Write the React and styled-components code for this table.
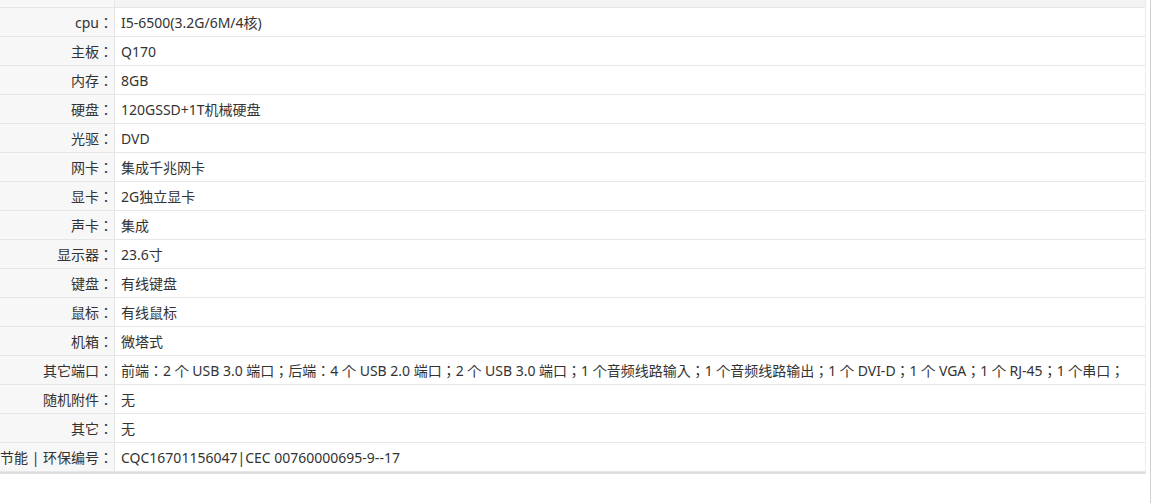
import React from 'react';
import styled, { createGlobalStyle } from 'styled-components';

const GlobalStyle = createGlobalStyle`
  html, body {
    margin: 0;
    padding: 0;
    background: #fff;
  }
  body {
    font-family: "Noto Sans", "Noto Sans CJK JP", sans-serif;
    font-size: 14px;
    color: #333;
  }
`;

const Page = styled.div`
  box-sizing: border-box;
  width: 1151px;
  min-height: 100vh;
  border-right: 1px solid #d2d2d2;
`;

const SpecTable = styled.div`
  box-sizing: border-box;
  width: 1146px;
  border-right: 1px solid #ececec;
  border-bottom: 2px solid #dedede;
`;

const Row = styled.div`
  display: grid;
  grid-template-columns: 115px 1fr;
  height: ${(p) => (p.$stub ? '7px' : '28px')};
  border-bottom: 1px solid #e6e6e6;
  background: ${(p) => (p.$stub ? '#f4f4f4' : '#fff')};
`;

const Label = styled.div`
  display: flex;
  align-items: center;
  justify-content: flex-end;
  padding-right: 1px;
  background: #f7f7f7;
  border-right: 1px solid #e6e6e6;
  white-space: nowrap;
`;

const Value = styled.div`
  display: flex;
  align-items: center;
  padding-left: 6px;
  white-space: nowrap;
`;

const specs = [
  ['cpu', 'I5-6500(3.2G/6M/4核)'],
  ['主板', 'Q170'],
  ['内存', '8GB'],
  ['硬盘', '120GSSD+1T机械硬盘'],
  ['光驱', 'DVD'],
  ['网卡', '集成千兆网卡'],
  ['显卡', '2G独立显卡'],
  ['声卡', '集成'],
  ['显示器', '23.6寸'],
  ['键盘', '有线键盘'],
  ['鼠标', '有线鼠标'],
  ['机箱', '微塔式'],
  [
    '其它端口',
    '前端：2 个 USB 3.0 端口；后端：4 个 USB 2.0 端口；2 个 USB 3.0 端口；1 个音频线路输入；1 个音频线路输出；1 个 DVI-D；1 个 VGA；1 个 RJ-45；1 个串口；',
  ],
  ['随机附件', '无'],
  ['其它', '无'],
  ['节能 | 环保编号', 'CQC16701156047|CEC 00760000695-9--17'],
];

export default function App() {
  return (
    <Page>
      <GlobalStyle />
      <SpecTable>
        <Row $stub>
          <Label />
          <Value />
        </Row>
        {specs.map(([k, v]) => (
          <Row key={k}>
            <Label>{k}：</Label>
            <Value>{v}</Value>
          </Row>
        ))}
      </SpecTable>
    </Page>
  );
}
